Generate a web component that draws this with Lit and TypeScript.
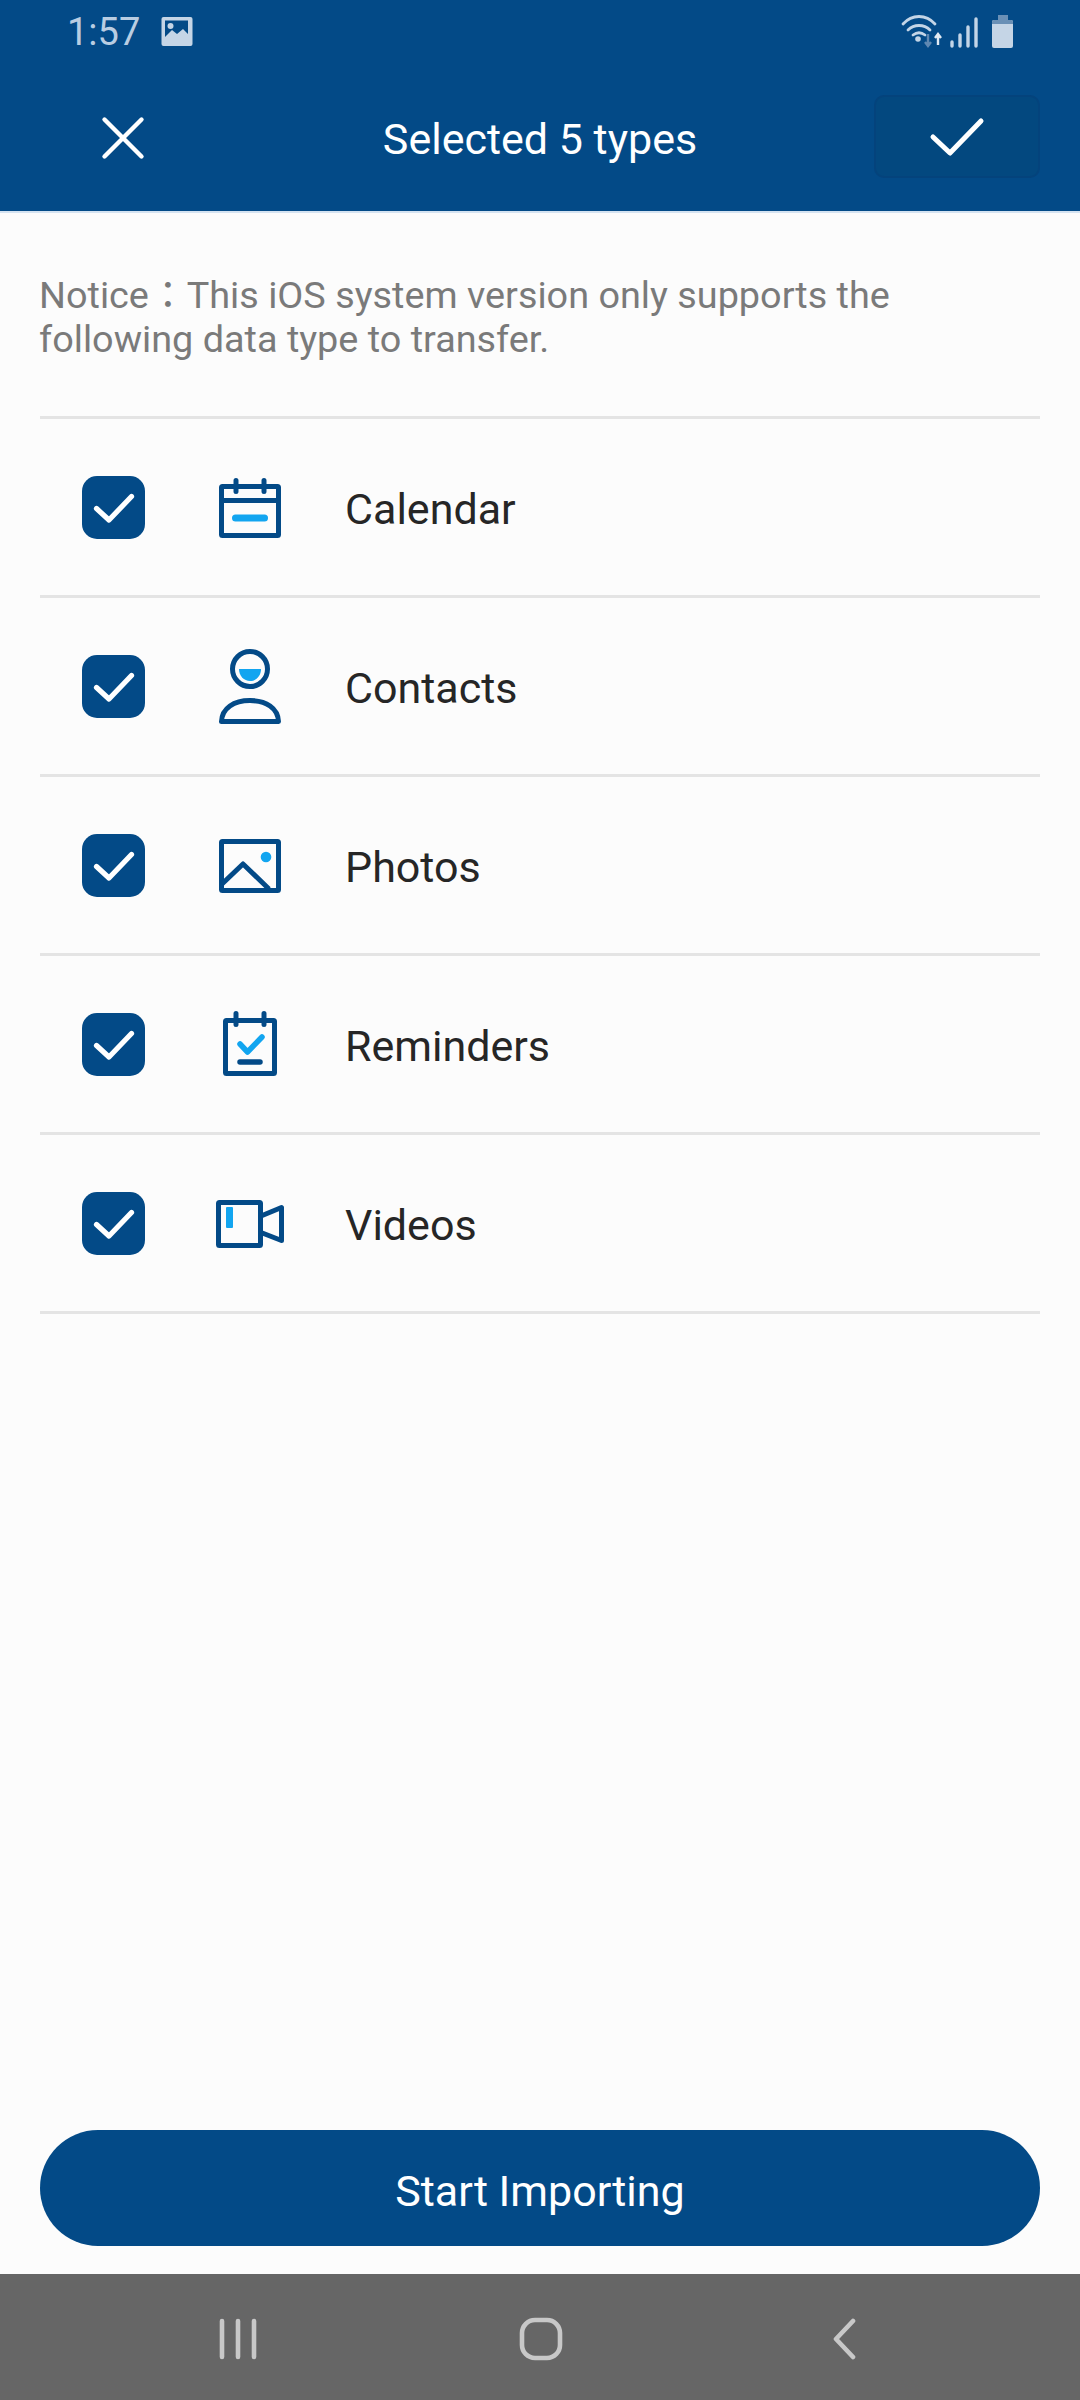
import { LitElement, html, css, svg, unsafeCSS } from "lit";
import { customElement } from "lit/decorators.js";

const NAVY = "#034a87";
const SKY = "#12a5f0";
const NAVY_CSS = unsafeCSS(NAVY);

const icons = {
  calendar: svg`
    <rect x="7.500" y="15.500" width="57" height="49" rx="1" fill="none" stroke="${NAVY}" stroke-width="5"/>
    <path d="M7 29.500h58" stroke="${NAVY}" stroke-width="5"/>
    <path d="M22 9.500v11M50 9.500v11" stroke="${NAVY}" stroke-width="5" stroke-linecap="round"/>
    <path d="M21.500 47h29" stroke="${SKY}" stroke-width="7" stroke-linecap="round"/>`,
  contacts: svg`
    <circle cx="36" cy="19" r="17.500" fill="none" stroke="${NAVY}" stroke-width="5"/>
    <path d="M25 19h22c0 7-5 12-11 12s-11-5-11-12z" fill="${SKY}"/>
    <path d="M7.500 71.500C8 58 20 50.500 36 50.500s28 7.500 28.500 21z" fill="none" stroke="${NAVY}" stroke-width="5" stroke-linejoin="round"/>`,
  photos: svg`
    <rect x="7.500" y="12.500" width="57" height="49" rx="1" fill="none" stroke="${NAVY}" stroke-width="5"/>
    <path d="M8 55l21-20 26 25" fill="none" stroke="${NAVY}" stroke-width="5" stroke-linejoin="round"/>
    <circle cx="52" cy="28" r="5.300" fill="${SKY}"/>`,
  reminders: svg`
    <rect x="11.500" y="12.500" width="49" height="53" rx="1" fill="none" stroke="${NAVY}" stroke-width="5"/>
    <path d="M22 5.500v11M50 5.500v11" stroke="${NAVY}" stroke-width="5" stroke-linecap="round"/>
    <path d="M26 36l7.500 8L48 29" fill="none" stroke="${SKY}" stroke-width="5.500" stroke-linecap="round" stroke-linejoin="round"/>
    <path d="M26 54h20" stroke="${NAVY}" stroke-width="5.500" stroke-linecap="round"/>`,
  videos: svg`
    <rect x="4.500" y="15.500" width="42" height="43" rx="1" fill="none" stroke="${NAVY}" stroke-width="5"/>
    <path d="M47 29l20.500-8.500v33L47 45.500" fill="none" stroke="${NAVY}" stroke-width="5" stroke-linejoin="round"/>
    <rect x="12" y="20" width="7" height="21" rx="1" fill="${SKY}"/>`,
};

const rows: [string, keyof typeof icons][] = [
  ["Calendar", "calendar"],
  ["Contacts", "contacts"],
  ["Photos", "photos"],
  ["Reminders", "reminders"],
  ["Videos", "videos"],
];

@customElement("app-root")
export class AppRoot extends LitElement {
  static styles = css`
    :host {
      display: flex;
      flex-direction: column;
      width: 1080px;
      height: 2400px;
      background: #fcfcfc;
      font-family: Roboto, "Noto Sans CJK JP", sans-serif;
      color: #262626;
    }
    svg { display: block; }
    .top {
      flex: none;
      height: 213px;
      box-sizing: border-box;
      background: ${NAVY_CSS};
      border-bottom: 2px solid #d5e3f1;
      display: flex;
      flex-direction: column;
    }
    .status {
      height: 64px;
      flex: none;
      padding: 0 67px;
      display: flex;
      align-items: center;
      color: #b9cde2;
      font-size: 38px;
    }
    .time { margin-right: 21px; }
    .spacer { flex: 1; }
    .bar {
      flex: 1;
      display: grid;
      grid-template-columns: 1fr auto 1fr;
      align-items: center;
      padding: 0 40px;
    }
    .close { margin-left: 61px; }
    .title {
      color: #fff;
      font-size: 43px;
      padding-top: 3px;
    }
    .confirm {
      justify-self: end;
      width: 166px;
      height: 83px;
      margin-top: -2px;
      box-sizing: border-box;
      border: 2px solid #04437c;
      border-radius: 10px;
      display: flex;
      align-items: center;
      justify-content: center;
      background: #03487f;
    }
    main {
      flex: 1;
      display: flex;
      flex-direction: column;
      padding: 0 40px;
      min-height: 0;
    }
    .notice {
      margin: 0;
      padding-top: 60px;
      height: 206px;
      box-sizing: border-box;
      border-bottom: 3px solid #e4e4e4;
      color: #7a7a7a;
      font-size: 37.800px;
      line-height: 44px;
    }
    .notice-text { display: block; margin-left: -1px; }
    .row {
      height: 179px;
      flex: none;
      box-sizing: border-box;
      border-bottom: 3px solid #e4e4e4;
      display: flex;
      align-items: center;
      padding-left: 42px;
      font-size: 43px;
    }
    .label { padding-top: 3px; }
    .check {
      width: 63px;
      height: 63px;
      border-radius: 15px;
      background: ${NAVY_CSS};
      display: flex;
      align-items: center;
      justify-content: center;
      flex: none;
    }
    .icon {
      width: 72px;
      height: 72px;
      margin-left: 69px;
      margin-right: 59px;
      flex: none;
      overflow: visible;
    }
    .cta {
      margin: auto 0 28px;
      height: 116px;
      box-sizing: border-box;
      padding-top: 5px;
      border-radius: 58px;
      background: ${NAVY_CSS};
      color: #fff;
      font-size: 43px;
      display: flex;
      align-items: center;
      justify-content: center;
    }
    .nav {
      flex: none;
      height: 126px;
      box-sizing: border-box;
      background: #666;
      padding: 3px 0 0 219px;
      display: flex;
      align-items: center;
    }
    .home { margin-left: 262px; }
    .back { margin-left: 269px; }
  `;

  render() {
    return html`
      <div class="top">
        <div class="status">
          <span class="time">1:57</span>
          <svg width="32" height="30" viewBox="0 0 32 30">
            <rect width="31" height="29" x="0.500" rx="2" fill="#c5d5e6"/>
            <rect x="4" y="3.500" width="23" height="17" fill="#034a87"/>
            <circle cx="9.500" cy="9" r="3" fill="#c5d5e6"/>
            <path d="M3 21l8-8 5 4 6-5 6 6v7H3z" fill="#c5d5e6"/>
          </svg>
          <span class="spacer"></span>
          <svg width="112" height="36" viewBox="0 0 112 36" fill="none">
            <g stroke="#c3d5e7" stroke-width="2.800" stroke-linecap="round">
              <path d="M2 10C11 0 25 0 34 10"/>
              <path d="M7 16c6-6 16-6 22 0"/>
              <path d="M12 21c4-3 8-3 12 0"/>
            </g>
            <circle cx="17" cy="25" r="2.800" fill="#c3d5e7"/>
            <path d="M27 20v12m-3-4l3 4 3-4" stroke="#5f88b2" stroke-width="2.400"/>
            <path d="M37 31V20m-3 4l3-4 3 4" stroke="#e1eaf3" stroke-width="2.400"/>
            <g stroke="#c3d5e7" stroke-width="3.400" stroke-linecap="round">
              <path d="M51 28v4M59 21v11M67 13v19M75 5v27"/>
            </g>
            <rect x="91" y="6" width="21" height="28" rx="2" fill="#c5d5e6"/>
            <path d="M97 6V1h10v5" fill="#6a90b6"/>
            <path d="M91 10V8a2 2 0 0 1 2-2h17a2 2 0 0 1 2 2v2z" fill="#6a90b6"/>
          </svg>
        </div>
        <div class="bar">
          <svg class="close" width="44" height="44" viewBox="0 0 44 44">
            <path d="M3.500 3.500l37 37M40.500 3.500l-37 37" stroke="#fff" stroke-width="4.400" stroke-linecap="round"/>
          </svg>
          <div class="title">Selected 5 types</div>
          <div class="confirm">
            <svg width="56" height="40" viewBox="0 0 56 40" fill="none">
              <path d="M4 20l17 16L52 4" stroke="#fff" stroke-width="5" stroke-linecap="round" stroke-linejoin="round"/>
            </svg>
          </div>
        </div>
      </div>
      <main>
        <p class="notice"><span class="notice-text">Notice：This iOS system version only supports the<br />following data type to transfer.</span></p>
        ${rows.map(
          ([label, icon]) => html`
            <div class="row">
              <div class="check">
                <svg width="42" height="32" viewBox="0 0 42 32" fill="none">
                  <path d="M3.500 17.500L16 29 38.500 5.500" stroke="#fff" stroke-width="5.200" stroke-linecap="round" stroke-linejoin="round"/>
                </svg>
              </div>
              <svg class="icon" viewBox="0 0 72 72">${icons[icon]}</svg>
              <span class="label">${label}</span>
            </div>
          `
        )}
        <div class="cta">Start Importing</div>
      </main>
      <div class="nav">
        <svg width="38" height="42" viewBox="0 0 38 42">
          <path d="M3 3v36M19 3v36M35 3v36" stroke="#c8c8c8" stroke-width="4.600" stroke-linecap="round"/>
        </svg>
        <svg class="home" width="44" height="44" viewBox="0 0 44 44" fill="none">
          <rect x="3" y="3" width="38" height="38" rx="13" stroke="#c8c8c8" stroke-width="4.600"/>
        </svg>
        <svg class="back" width="24" height="42" viewBox="0 0 24 42" fill="none">
          <path d="M21 3L4 21l17 18" stroke="#c8c8c8" stroke-width="4.600" stroke-linecap="round" stroke-linejoin="round"/>
        </svg>
      </div>
    `;
  }
}
